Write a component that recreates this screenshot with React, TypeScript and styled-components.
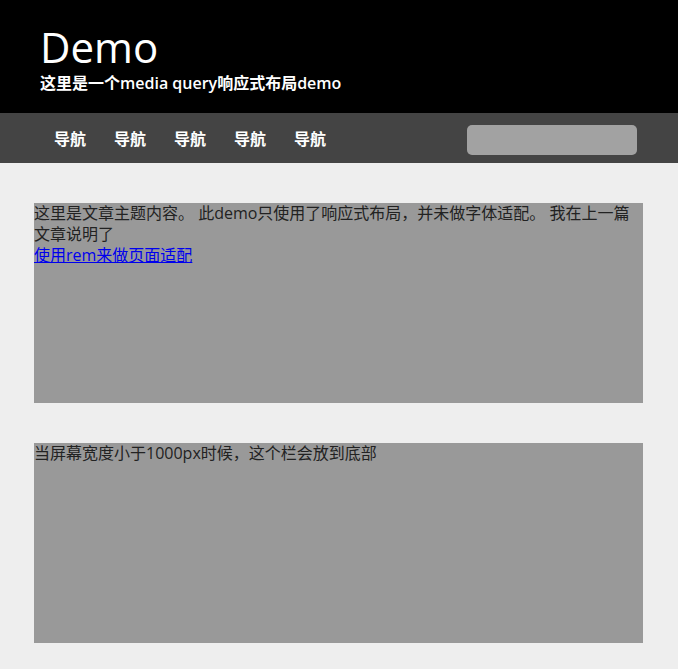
import React from "react";
import styled, {createGlobalStyle} from "styled-components";

const GlobalStyle = createGlobalStyle`
    * {
        box-sizing: border-box;
    }

    body {
        margin: 0;
        background-color: #eeeeee;
        font-family: "Open Sans", "Noto Sans CJK SC", sans-serif;
        color: #222222;
    }
`

const navItems = ["导航", "导航", "导航", "导航", "导航"]

export default function App() {
    return (
        <>
            <GlobalStyle/>
            <Header>
                <Title>Demo</Title>
                <Subtitle>这里是一个media query响应式布局demo</Subtitle>
            </Header>
            <Nav>
                <NavList>
                    {navItems.map((item, i) => (
                        <NavItem key={i}>{item}</NavItem>
                    ))}
                </NavList>
                <Search type="text"/>
            </Nav>
            <Main>
                <Block>
                    这里是文章主题内容。 此demo只使用了响应式布局，并未做字体适配。 我在上一篇文章说明了
                    <br/>
                    <ArticleLink href="#">使用rem来做页面适配</ArticleLink>
                </Block>
                <Block>当屏幕宽度小于1000px时候，这个栏会放到底部</Block>
            </Main>
        </>
    );
}

const Header = styled.header`
    height: 113px;
    background-color: #000000;
    color: #ffffff;
    padding: 22px 40px 0;
`

const Title = styled.h1`
    margin: 0;
    font-size: 42px;
    font-weight: 400;
    line-height: 50px;
`

const Subtitle = styled.p`
    margin: 0;
    font-size: 16px;
    font-weight: 600;
    line-height: 22px;
`

const Nav = styled.nav`
    height: 50px;
    background-color: #444444;
    display: flex;
    align-items: center;
    justify-content: space-between;
    padding: 0 41px 0 40px;
`

const NavList = styled.ul`
    display: flex;
    margin: 0;
    padding: 0;
    list-style: none;
`

const NavItem = styled.li`
    padding: 0 14px;
    color: #ffffff;
    font-size: 16px;
    font-weight: 600;
`

const Search = styled.input`
    width: 170px;
    height: 30px;
    margin-top: 4px;
    border: none;
    border-radius: 5px;
    background-color: #a2a2a2;
    outline: none;
`

const Main = styled.main`
    padding: 40px 35px 26px 34px;
    display: flex;
    flex-direction: column;
    gap: 40px;
`

const Block = styled.section`
    height: 200px;
    background-color: #999999;
    font-size: 16px;
    line-height: 21px;
`

const ArticleLink = styled.a`
    color: #0000ee;
`
